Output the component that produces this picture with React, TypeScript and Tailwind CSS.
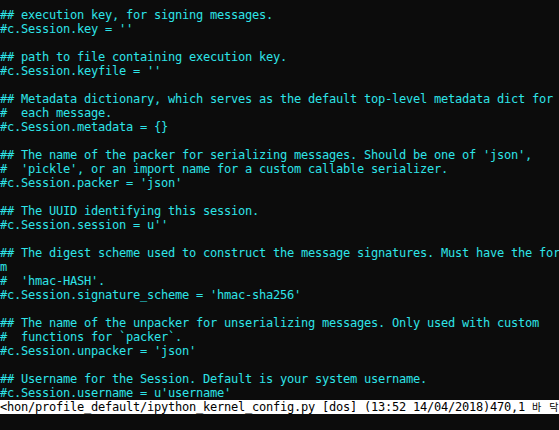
import React from "react";

const lines: string[] = [
  "## execution key, for signing messages.",
  "#c.Session.key = ''",
  "",
  "## path to file containing execution key.",
  "#c.Session.keyfile = ''",
  "",
  "## Metadata dictionary, which serves as the default top-level metadata dict for",
  "#  each message.",
  "#c.Session.metadata = {}",
  "",
  "## The name of the packer for serializing messages. Should be one of 'json',",
  "#  'pickle', or an import name for a custom callable serializer.",
  "#c.Session.packer = 'json'",
  "",
  "## The UUID identifying this session.",
  "#c.Session.session = u''",
  "",
  "## The digest scheme used to construct the message signatures. Must have the for",
  "m",
  "#  'hmac-HASH'.",
  "#c.Session.signature_scheme = 'hmac-sha256'",
  "",
  "## The name of the unpacker for unserializing messages. Only used with custom",
  "#  functions for `packer`.",
  "#c.Session.unpacker = 'json'",
  "",
  "## Username for the Session. Default is your system username.",
  "#c.Session.username = u'username'",
];

export default function App() {
  return (
    <div
      className="w-[559px] h-[430px] bg-[#0c0c0c] overflow-hidden pt-[8px] text-[12px] tracking-[-0.224px]"
      style={{ fontFamily: '"DejaVu Sans Mono", "Noto Sans CJK KR", monospace' }}
    >
      {lines.map((l, i) => (
        <div key={i} className="h-[14px] leading-[14px] whitespace-pre text-[#2ee4e8]">
          {l}
        </div>
      ))}
      <div className="h-[14px] leading-[14px] whitespace-pre bg-white text-black w-[559px]">
        {"<hon/profile_default/ipython_kernel_config.py [dos] (13:52 14/04/2018)470,1 "}
        <span className="text-[10px] tracking-[1px]">바 닥</span>
      </div>
    </div>
  );
}
